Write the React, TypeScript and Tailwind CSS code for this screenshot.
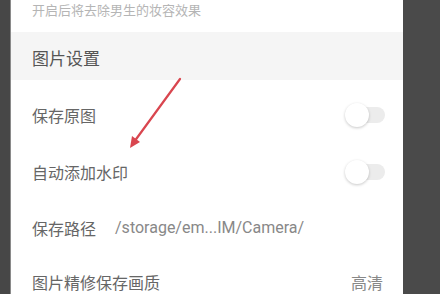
import React from 'react';

const Toggle: React.FC = () => (
  <div className="relative w-[40px] h-[24px] mr-[18px]">
    <div className="absolute right-0 top-[4px] w-[30px] h-[16px] rounded-full bg-[#ececec]" />
    <div className="absolute left-0 top-0 w-[24px] h-[24px] rounded-full bg-white shadow-[0_1px_3px_rgba(0,0,0,0.22)]" />
  </div>
);

const Row: React.FC<{ h: string; children: React.ReactNode }> = ({ h, children }) => (
  <div className={`shrink-0 flex items-center justify-between pl-[21px] ${h}`}>{children}</div>
);

export default function App() {
  return (
    <div
      className="w-[440px] h-[294px] overflow-hidden flex bg-[#4a4a4a]"
      style={{ fontFamily: '"Noto Sans CJK SC", "Noto Sans", sans-serif' }}
    >
      <div className="w-[10px] bg-[#474747]" />
      <div className="w-px bg-[#8a8a8a]" />
      <div className="relative w-[392px] bg-white flex flex-col overflow-hidden">
        <div className="shrink-0 h-[32px] pl-[21px] flex items-start">
          <span className="text-[13px] leading-[20px] text-[#b5b5b5]">开启后将去除男生的妆容效果</span>
        </div>
        <div className="shrink-0 h-[48px] bg-[#f5f5f5] pl-[21px] flex items-center">
          <span className="text-[17px] leading-none text-[#555] mt-[2px]">图片设置</span>
        </div>
        <div className="shrink-0 h-[7px]" />
        <Row h="h-[56px]">
          <span className="text-[16px] leading-none text-[#666]">保存原图</span>
          <Toggle />
        </Row>
        <Row h="h-[57px]">
          <span className="text-[16px] leading-none text-[#666]">自动添加水印</span>
          <Toggle />
        </Row>
        <Row h="h-[56px] justify-start">
          <span className="text-[16px] leading-none text-[#666]">保存路径</span>
          <span className="text-[16px] leading-none text-[#888] ml-[19px]" style={{ fontFamily: 'Roboto, sans-serif' }}>
            /storage/em...IM/Camera/
          </span>
        </Row>
        <div className="shrink-0 h-[38px] pt-[18px] flex items-start justify-between pl-[21px]">
          <span className="text-[16px] leading-none text-[#666]">图片精修保存画质</span>
          <span className="text-[16px] leading-none text-[#888] mr-[20px]">高清</span>
        </div>
        <svg className="absolute left-0 top-0" width="392" height="294" viewBox="0 0 392 294">
          <line x1="169" y1="79" x2="123" y2="142" stroke="#d9464f" strokeWidth="2.2" strokeLinecap="round" />
          <path d="M119 148 L121 136 L129 142 Z" fill="#d9464f" />
        </svg>
      </div>
    </div>
  );
}
